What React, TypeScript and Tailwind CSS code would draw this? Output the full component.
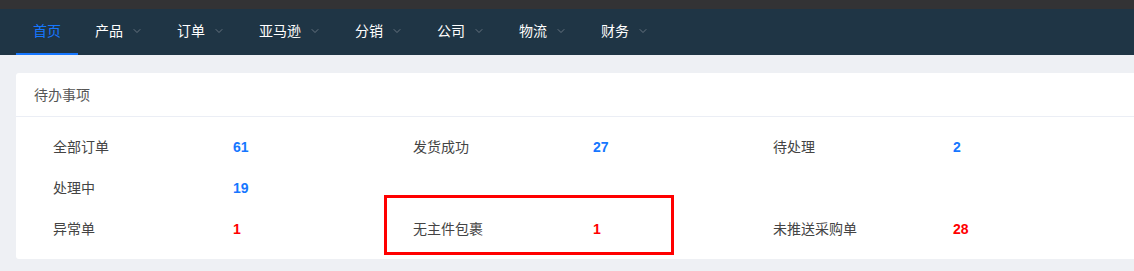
import { ChevronDown } from "lucide-react"

const menus = [
  { name: "首页", active: true, sub: false },
  { name: "产品", sub: true },
  { name: "订单", sub: true },
  { name: "亚马逊", sub: true },
  { name: "分销", sub: true },
  { name: "公司", sub: true },
  { name: "物流", sub: true },
  { name: "财务", sub: true },
]

const todos = [
  { label: "全部订单", value: 61, warn: false },
  { label: "发货成功", value: 27, warn: false },
  { label: "待处理", value: 2, warn: false },
  { label: "处理中", value: 19, warn: false },
  null,
  null,
  { label: "异常单", value: 1, warn: true },
  { label: "无主件包裹", value: 1, warn: true, marked: true },
  { label: "未推送采购单", value: 28, warn: true },
]

export default function App() {
  return (
    <div className="min-h-[271px] bg-[#eef0f4] font-['Liberation_Sans','Noto_Sans_CJK_SC',sans-serif] overflow-hidden">
      <div className="h-[9px] bg-[#333335]" />
      <nav className="flex h-[46px] bg-[#1f3545] pl-4">
        {menus.map((m) => (
          <div
            key={m.name}
            className={`flex items-center px-[17px] text-sm border-b-2 ${
              m.active ? "text-[#1677ff] border-[#1677ff]" : "text-white border-transparent"
            }`}
          >
            <span>{m.name}</span>
            {m.sub && <ChevronDown className="ml-2 w-3 h-3 text-[#7d8793]" strokeWidth={1.5} />}
          </div>
        ))}
      </nav>

      <div className="pl-4 pt-[18px]">
        <div className="bg-white rounded-l-[3px] w-[1130px]">
          <div className="h-[44px] flex items-center pl-[18px] text-sm text-[#555] border-b border-[#ebeef5]">
            待办事项
          </div>
          <div className="grid grid-cols-[360px_360px_360px] pl-[37px] pt-[9px] pb-[10px]">
            {todos.map((t, i) =>
              t ? (
                <div key={i} className="relative flex items-center h-[41px] text-sm">
                  <span className="w-[180px] text-[#444]">{t.label}</span>
                  <span className={`font-bold ${t.warn ? "text-[#ff0000]" : "text-[#1677ff]"}`}>{t.value}</span>
                  {t.marked && (
                    <div className="absolute left-[-29px] top-[-13px] w-[290px] h-[60px] border-[3px] border-[#ff0000]" />
                  )}
                </div>
              ) : (
                <div key={i} className="h-[41px]" />
              )
            )}
          </div>
        </div>
      </div>
    </div>
  )
}
